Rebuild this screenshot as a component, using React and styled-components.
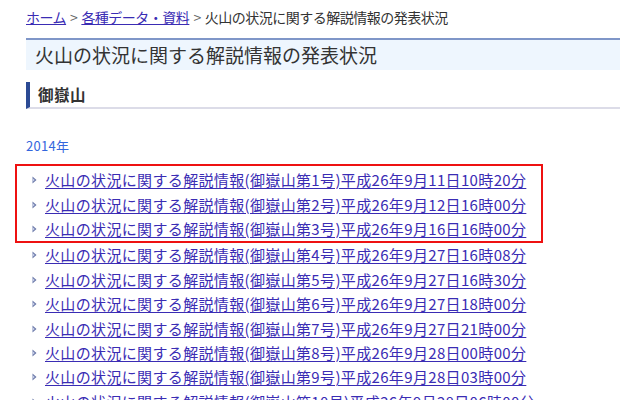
import React from "react";
import styled, { createGlobalStyle } from "styled-components";

const Global = createGlobalStyle`
  html, body { margin: 0; padding: 0; background: #fff; }
  body { font-family: "Noto Sans CJK JP", "Noto Sans", sans-serif; color: #333; }
`;

const Page = styled.div`
  padding: 8px 0 0 26px;
  width: 620px;
  box-sizing: border-box;
  height: 400px;
  overflow: hidden;
`;

const Crumbs = styled.nav`
  font-size: 14px;
  line-height: 18px;
  color: #333;
  white-space: nowrap;
  letter-spacing: -0.5px;
`;

const CrumbLink = styled.a`
  color: #3a2cb4;
  text-decoration: underline;
`;

const Sep = styled.span`
  color: #666;
  margin: 0 4px;
`;

const Title = styled.h1`
  margin: 12px 0 0;
  border-top: 2px solid #7f96c8;
  background: #eef6fe;
  font-size: 19px;
  font-weight: normal;
  line-height: 30px;
  padding-left: 9px;
  color: #333;
  white-space: nowrap;
`;

const Section = styled.h2`
  margin: 12px 0 0;
  border-left: 4px solid #2b4a94;
  border-bottom: 2px solid #dcdce8;
  font-size: 15.5px;
  font-weight: bold;
  line-height: 25px;
  padding-left: 8px;
  color: #333;
  letter-spacing: 0.5px;
`;

const Year = styled.div`
  margin-top: 28px;
  font-size: 13px;
  line-height: 18px;
  color: #3366dd;
  letter-spacing: 0.3px;
`;

const List = styled.ul`
  list-style: none;
  margin: 9px 0 0;
  padding: 0;
`;

const Highlight = styled.li`
  margin-left: -11px;
  width: 528px;
  box-sizing: border-box;
  border: 2px solid #ee1111;
  padding: 2px 0 0 9px;
  list-style: none;
`;

const Inner = styled.ul`
  list-style: none;
  margin: 0;
  padding: 0;
`;

const Item = styled.li`
  display: flex;
  align-items: center;
  height: 24.4px;
  padding-left: 6px;
  gap: 8px;
  white-space: nowrap;
`;

const ItemLink = styled.a`
  color: #3a2cb4;
  font-size: 15px;
  letter-spacing: 0.35px;
  line-height: 20px;
  text-decoration: underline;
  text-underline-offset: 2px;
`;

const Bullet = () => (
  <svg width="5" height="8" viewBox="0 0 5 8" aria-hidden="true">
    <path d="M0.5 0.5 L4.5 4 L0.5 7.5 Z" fill="#6a78a8" />
    <path d="M0.5 2 L2.8 4 L0.5 6 Z" fill="#c8d0e8" />
  </svg>
);

const base = "火山の状況に関する解説情報(御嶽山第";
const items = [
  ["1", "9月11日10時20分"],
  ["2", "9月12日16時00分"],
  ["3", "9月16日16時00分"],
  ["4", "9月27日16時08分"],
  ["5", "9月27日16時30分"],
  ["6", "9月27日18時00分"],
  ["7", "9月27日21時00分"],
  ["8", "9月28日00時00分"],
  ["9", "9月28日03時00分"],
  ["10", "9月28日06時00分"],
];

const Row = ({ n, d }) => (
  <Item>
    <Bullet />
    <ItemLink href="#">{`${base}${n}号)平成26年${d}`}</ItemLink>
  </Item>
);

export default function App() {
  return (
    <>
      <Global />
      <Page>
        <Crumbs>
          <CrumbLink href="#">ホーム</CrumbLink>
          <Sep>&gt;</Sep>
          <CrumbLink href="#">各種データ・資料</CrumbLink>
          <Sep>&gt;</Sep>
          火山の状況に関する解説情報の発表状況
        </Crumbs>
        <Title>火山の状況に関する解説情報の発表状況</Title>
        <Section>御嶽山</Section>
        <Year>2014年</Year>
        <List>
          <Highlight>
            <Inner>
              {items.slice(0, 3).map(([n, d]) => (
                <Row key={n} n={n} d={d} />
              ))}
            </Inner>
          </Highlight>
          {items.slice(3).map(([n, d]) => (
            <Row key={n} n={n} d={d} />
          ))}
        </List>
      </Page>
    </>
  );
}
